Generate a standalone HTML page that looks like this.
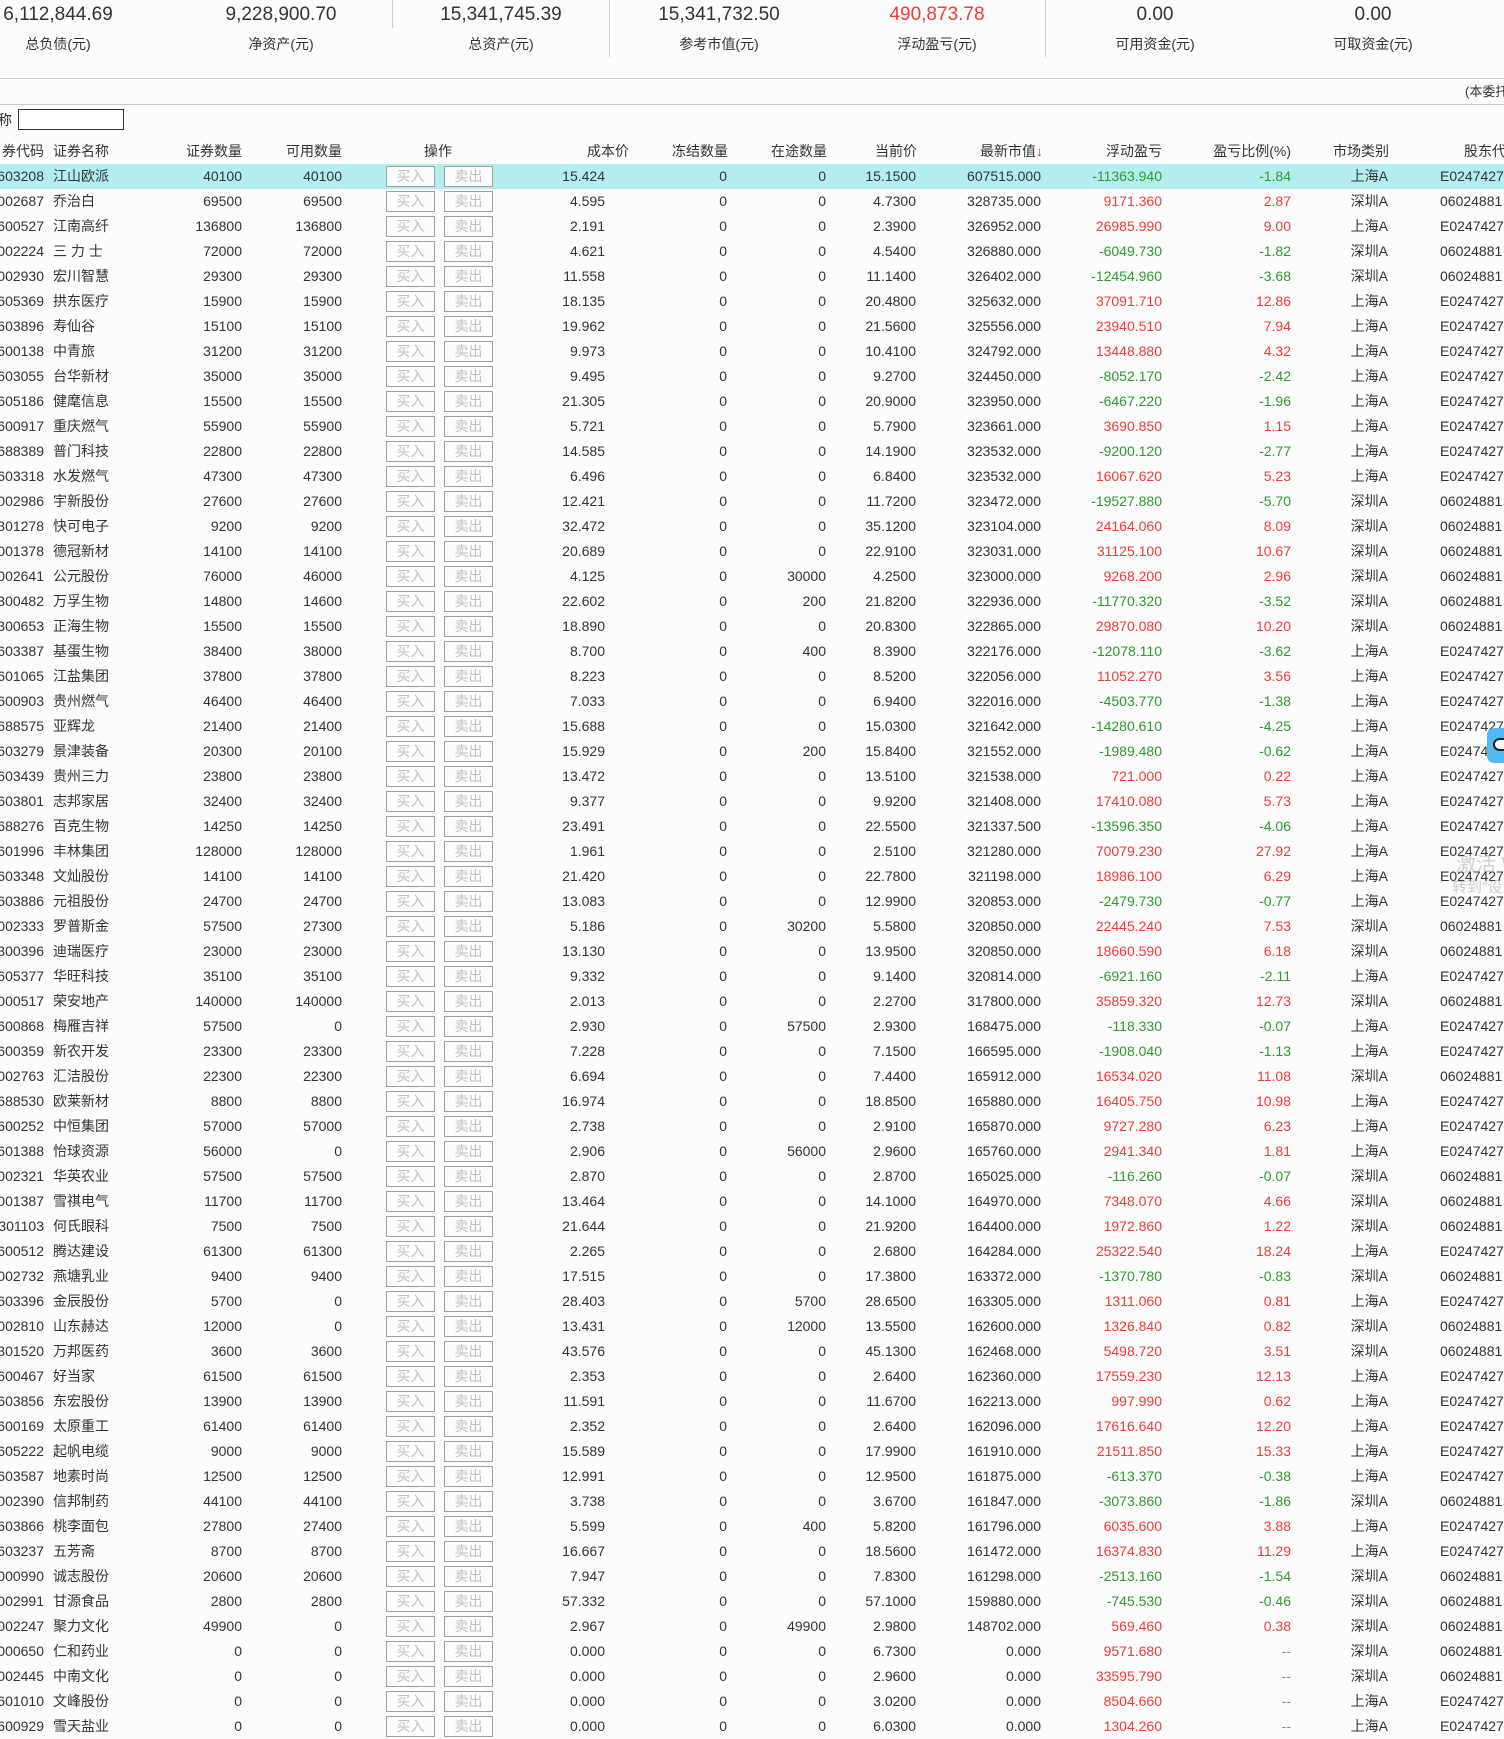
<!DOCTYPE html>
<html><head><meta charset="utf-8">
<style>
*{margin:0;padding:0;box-sizing:border-box}
html,body{width:1504px;height:1736px;overflow:hidden;background:#fcfcfc;font-family:"Liberation Sans","Noto Sans CJK SC",sans-serif;color:#333}
.t{position:absolute;white-space:nowrap}
.num{font-size:19px;top:3px;line-height:24px;transform:translateX(-50%)}
.lab{font-size:14px;top:34px;line-height:20px;transform:translateX(-50%)}
.vl{position:absolute;width:1px;background:#ccc;top:0}
.hl{position:absolute;left:0;width:1504px;height:1px;background:#ccc}
#hd{position:absolute;top:139px;left:0;width:1504px;height:24px;font-size:14px;line-height:24px}
#hd span{position:absolute;white-space:nowrap}
#tb{position:absolute;top:164px;left:0;width:1504px}
.r{position:relative;height:25px;font-size:14px;line-height:25px}
.r.s{background:#b2eeee}
.r span{position:absolute;white-space:nowrap}
.r span:nth-child(1){right:1460px}
.r span:nth-child(2){left:53px}
.r span:nth-child(3){right:1262px}
.r span:nth-child(4){right:1162px}
.r span:nth-child(5),.r span:nth-child(6){top:2px;width:49px;height:21px;border:1px solid #a0a0a0;color:#c0c0c0;text-align:center;line-height:19px;font-size:14px;background:#fcfcfc}
.r span:nth-child(5){left:386px}
.r span:nth-child(6){left:444px}
.r span:nth-child(7){right:899px}
.r span:nth-child(8){right:777px}
.r span:nth-child(9){right:678px}
.r span:nth-child(10){right:588px}
.r span:nth-child(11){right:463px}
.r span:nth-child(12){right:342px}
.r span:nth-child(13){right:213px}
.r span:nth-child(14){right:116px}
.r span:nth-child(15){left:1440px}
.u span:nth-child(12),.u span:nth-child(13){color:#f03a3a}
.d span:nth-child(12),.d span:nth-child(13){color:#2c9a2c}
.g span:nth-child(13){color:#888}
</style></head><body>
<div class="t num" style="left:58px">6,112,844.69</div>
<div class="t num" style="left:281px">9,228,900.70</div>
<div class="t num" style="left:501px">15,341,745.39</div>
<div class="t num" style="left:719px">15,341,732.50</div>
<div class="t num" style="left:937px;color:#f03a3a">490,873.78</div>
<div class="t num" style="left:1155px">0.00</div>
<div class="t num" style="left:1373px">0.00</div>
<div class="t lab" style="left:58px">总负债(元)</div>
<div class="t lab" style="left:281px">净资产(元)</div>
<div class="t lab" style="left:501px">总资产(元)</div>
<div class="t lab" style="left:719px">参考市值(元)</div>
<div class="t lab" style="left:937px">浮动盈亏(元)</div>
<div class="t lab" style="left:1155px">可用资金(元)</div>
<div class="t lab" style="left:1373px">可取资金(元)</div>
<div class="vl" style="left:392px;height:28px"></div>
<div class="vl" style="left:609px;height:57px"></div>
<div class="vl" style="left:1045px;height:57px"></div>
<div class="hl" style="top:78px"></div>
<div class="hl" style="top:104px"></div>
<div class="t" style="left:1465px;top:82px;font-size:13px;line-height:20px">(本委托</div>
<div class="t" style="left:-2px;top:110px;font-size:14px;line-height:20px">称</div>
<div style="position:absolute;left:18px;top:109px;width:106px;height:21px;border:1px solid #333;background:#fff"></div>
<div id="hd">
<span style="right:1460px">券代码</span><span style="left:53px">证券名称</span><span style="right:1262px">证券数量</span><span style="right:1162px">可用数量</span><span style="left:424px">操作</span><span style="right:875px">成本价</span><span style="right:776px">冻结数量</span><span style="right:677px">在途数量</span><span style="right:587px">当前价</span><span style="right:461px">最新市值<b style="color:#e22;font-weight:normal">↓</b></span><span style="right:342px">浮动盈亏</span><span style="right:213px">盈亏比例(%)</span><span style="right:115px">市场类别</span><span style="left:1464px">股东代</span>
</div>
<div id="tb">
<div class="r s d"><span>603208</span><span>江山欧派</span><span>40100</span><span>40100</span><span>买入</span><span>卖出</span><span>15.424</span><span>0</span><span>0</span><span>15.1500</span><span>607515.000</span><span>-11363.940</span><span>-1.84</span><span>上海A</span><span>E0247427</span></div>
<div class="r u"><span>002687</span><span>乔治白</span><span>69500</span><span>69500</span><span>买入</span><span>卖出</span><span>4.595</span><span>0</span><span>0</span><span>4.7300</span><span>328735.000</span><span>9171.360</span><span>2.87</span><span>深圳A</span><span>06024881</span></div>
<div class="r u"><span>600527</span><span>江南高纤</span><span>136800</span><span>136800</span><span>买入</span><span>卖出</span><span>2.191</span><span>0</span><span>0</span><span>2.3900</span><span>326952.000</span><span>26985.990</span><span>9.00</span><span>上海A</span><span>E0247427</span></div>
<div class="r d"><span>002224</span><span>三 力 士</span><span>72000</span><span>72000</span><span>买入</span><span>卖出</span><span>4.621</span><span>0</span><span>0</span><span>4.5400</span><span>326880.000</span><span>-6049.730</span><span>-1.82</span><span>深圳A</span><span>06024881</span></div>
<div class="r d"><span>002930</span><span>宏川智慧</span><span>29300</span><span>29300</span><span>买入</span><span>卖出</span><span>11.558</span><span>0</span><span>0</span><span>11.1400</span><span>326402.000</span><span>-12454.960</span><span>-3.68</span><span>深圳A</span><span>06024881</span></div>
<div class="r u"><span>605369</span><span>拱东医疗</span><span>15900</span><span>15900</span><span>买入</span><span>卖出</span><span>18.135</span><span>0</span><span>0</span><span>20.4800</span><span>325632.000</span><span>37091.710</span><span>12.86</span><span>上海A</span><span>E0247427</span></div>
<div class="r u"><span>603896</span><span>寿仙谷</span><span>15100</span><span>15100</span><span>买入</span><span>卖出</span><span>19.962</span><span>0</span><span>0</span><span>21.5600</span><span>325556.000</span><span>23940.510</span><span>7.94</span><span>上海A</span><span>E0247427</span></div>
<div class="r u"><span>600138</span><span>中青旅</span><span>31200</span><span>31200</span><span>买入</span><span>卖出</span><span>9.973</span><span>0</span><span>0</span><span>10.4100</span><span>324792.000</span><span>13448.880</span><span>4.32</span><span>上海A</span><span>E0247427</span></div>
<div class="r d"><span>603055</span><span>台华新材</span><span>35000</span><span>35000</span><span>买入</span><span>卖出</span><span>9.495</span><span>0</span><span>0</span><span>9.2700</span><span>324450.000</span><span>-8052.170</span><span>-2.42</span><span>上海A</span><span>E0247427</span></div>
<div class="r d"><span>605186</span><span>健麾信息</span><span>15500</span><span>15500</span><span>买入</span><span>卖出</span><span>21.305</span><span>0</span><span>0</span><span>20.9000</span><span>323950.000</span><span>-6467.220</span><span>-1.96</span><span>上海A</span><span>E0247427</span></div>
<div class="r u"><span>600917</span><span>重庆燃气</span><span>55900</span><span>55900</span><span>买入</span><span>卖出</span><span>5.721</span><span>0</span><span>0</span><span>5.7900</span><span>323661.000</span><span>3690.850</span><span>1.15</span><span>上海A</span><span>E0247427</span></div>
<div class="r d"><span>688389</span><span>普门科技</span><span>22800</span><span>22800</span><span>买入</span><span>卖出</span><span>14.585</span><span>0</span><span>0</span><span>14.1900</span><span>323532.000</span><span>-9200.120</span><span>-2.77</span><span>上海A</span><span>E0247427</span></div>
<div class="r u"><span>603318</span><span>水发燃气</span><span>47300</span><span>47300</span><span>买入</span><span>卖出</span><span>6.496</span><span>0</span><span>0</span><span>6.8400</span><span>323532.000</span><span>16067.620</span><span>5.23</span><span>上海A</span><span>E0247427</span></div>
<div class="r d"><span>002986</span><span>宇新股份</span><span>27600</span><span>27600</span><span>买入</span><span>卖出</span><span>12.421</span><span>0</span><span>0</span><span>11.7200</span><span>323472.000</span><span>-19527.880</span><span>-5.70</span><span>深圳A</span><span>06024881</span></div>
<div class="r u"><span>301278</span><span>快可电子</span><span>9200</span><span>9200</span><span>买入</span><span>卖出</span><span>32.472</span><span>0</span><span>0</span><span>35.1200</span><span>323104.000</span><span>24164.060</span><span>8.09</span><span>深圳A</span><span>06024881</span></div>
<div class="r u"><span>001378</span><span>德冠新材</span><span>14100</span><span>14100</span><span>买入</span><span>卖出</span><span>20.689</span><span>0</span><span>0</span><span>22.9100</span><span>323031.000</span><span>31125.100</span><span>10.67</span><span>深圳A</span><span>06024881</span></div>
<div class="r u"><span>002641</span><span>公元股份</span><span>76000</span><span>46000</span><span>买入</span><span>卖出</span><span>4.125</span><span>0</span><span>30000</span><span>4.2500</span><span>323000.000</span><span>9268.200</span><span>2.96</span><span>深圳A</span><span>06024881</span></div>
<div class="r d"><span>300482</span><span>万孚生物</span><span>14800</span><span>14600</span><span>买入</span><span>卖出</span><span>22.602</span><span>0</span><span>200</span><span>21.8200</span><span>322936.000</span><span>-11770.320</span><span>-3.52</span><span>深圳A</span><span>06024881</span></div>
<div class="r u"><span>300653</span><span>正海生物</span><span>15500</span><span>15500</span><span>买入</span><span>卖出</span><span>18.890</span><span>0</span><span>0</span><span>20.8300</span><span>322865.000</span><span>29870.080</span><span>10.20</span><span>深圳A</span><span>06024881</span></div>
<div class="r d"><span>603387</span><span>基蛋生物</span><span>38400</span><span>38000</span><span>买入</span><span>卖出</span><span>8.700</span><span>0</span><span>400</span><span>8.3900</span><span>322176.000</span><span>-12078.110</span><span>-3.62</span><span>上海A</span><span>E0247427</span></div>
<div class="r u"><span>601065</span><span>江盐集团</span><span>37800</span><span>37800</span><span>买入</span><span>卖出</span><span>8.223</span><span>0</span><span>0</span><span>8.5200</span><span>322056.000</span><span>11052.270</span><span>3.56</span><span>上海A</span><span>E0247427</span></div>
<div class="r d"><span>600903</span><span>贵州燃气</span><span>46400</span><span>46400</span><span>买入</span><span>卖出</span><span>7.033</span><span>0</span><span>0</span><span>6.9400</span><span>322016.000</span><span>-4503.770</span><span>-1.38</span><span>上海A</span><span>E0247427</span></div>
<div class="r d"><span>688575</span><span>亚辉龙</span><span>21400</span><span>21400</span><span>买入</span><span>卖出</span><span>15.688</span><span>0</span><span>0</span><span>15.0300</span><span>321642.000</span><span>-14280.610</span><span>-4.25</span><span>上海A</span><span>E0247427</span></div>
<div class="r d"><span>603279</span><span>景津装备</span><span>20300</span><span>20100</span><span>买入</span><span>卖出</span><span>15.929</span><span>0</span><span>200</span><span>15.8400</span><span>321552.000</span><span>-1989.480</span><span>-0.62</span><span>上海A</span><span>E0247427</span></div>
<div class="r u"><span>603439</span><span>贵州三力</span><span>23800</span><span>23800</span><span>买入</span><span>卖出</span><span>13.472</span><span>0</span><span>0</span><span>13.5100</span><span>321538.000</span><span>721.000</span><span>0.22</span><span>上海A</span><span>E0247427</span></div>
<div class="r u"><span>603801</span><span>志邦家居</span><span>32400</span><span>32400</span><span>买入</span><span>卖出</span><span>9.377</span><span>0</span><span>0</span><span>9.9200</span><span>321408.000</span><span>17410.080</span><span>5.73</span><span>上海A</span><span>E0247427</span></div>
<div class="r d"><span>688276</span><span>百克生物</span><span>14250</span><span>14250</span><span>买入</span><span>卖出</span><span>23.491</span><span>0</span><span>0</span><span>22.5500</span><span>321337.500</span><span>-13596.350</span><span>-4.06</span><span>上海A</span><span>E0247427</span></div>
<div class="r u"><span>601996</span><span>丰林集团</span><span>128000</span><span>128000</span><span>买入</span><span>卖出</span><span>1.961</span><span>0</span><span>0</span><span>2.5100</span><span>321280.000</span><span>70079.230</span><span>27.92</span><span>上海A</span><span>E0247427</span></div>
<div class="r u"><span>603348</span><span>文灿股份</span><span>14100</span><span>14100</span><span>买入</span><span>卖出</span><span>21.420</span><span>0</span><span>0</span><span>22.7800</span><span>321198.000</span><span>18986.100</span><span>6.29</span><span>上海A</span><span>E0247427</span></div>
<div class="r d"><span>603886</span><span>元祖股份</span><span>24700</span><span>24700</span><span>买入</span><span>卖出</span><span>13.083</span><span>0</span><span>0</span><span>12.9900</span><span>320853.000</span><span>-2479.730</span><span>-0.77</span><span>上海A</span><span>E0247427</span></div>
<div class="r u"><span>002333</span><span>罗普斯金</span><span>57500</span><span>27300</span><span>买入</span><span>卖出</span><span>5.186</span><span>0</span><span>30200</span><span>5.5800</span><span>320850.000</span><span>22445.240</span><span>7.53</span><span>深圳A</span><span>06024881</span></div>
<div class="r u"><span>300396</span><span>迪瑞医疗</span><span>23000</span><span>23000</span><span>买入</span><span>卖出</span><span>13.130</span><span>0</span><span>0</span><span>13.9500</span><span>320850.000</span><span>18660.590</span><span>6.18</span><span>深圳A</span><span>06024881</span></div>
<div class="r d"><span>605377</span><span>华旺科技</span><span>35100</span><span>35100</span><span>买入</span><span>卖出</span><span>9.332</span><span>0</span><span>0</span><span>9.1400</span><span>320814.000</span><span>-6921.160</span><span>-2.11</span><span>上海A</span><span>E0247427</span></div>
<div class="r u"><span>000517</span><span>荣安地产</span><span>140000</span><span>140000</span><span>买入</span><span>卖出</span><span>2.013</span><span>0</span><span>0</span><span>2.2700</span><span>317800.000</span><span>35859.320</span><span>12.73</span><span>深圳A</span><span>06024881</span></div>
<div class="r d"><span>600868</span><span>梅雁吉祥</span><span>57500</span><span>0</span><span>买入</span><span>卖出</span><span>2.930</span><span>0</span><span>57500</span><span>2.9300</span><span>168475.000</span><span>-118.330</span><span>-0.07</span><span>上海A</span><span>E0247427</span></div>
<div class="r d"><span>600359</span><span>新农开发</span><span>23300</span><span>23300</span><span>买入</span><span>卖出</span><span>7.228</span><span>0</span><span>0</span><span>7.1500</span><span>166595.000</span><span>-1908.040</span><span>-1.13</span><span>上海A</span><span>E0247427</span></div>
<div class="r u"><span>002763</span><span>汇洁股份</span><span>22300</span><span>22300</span><span>买入</span><span>卖出</span><span>6.694</span><span>0</span><span>0</span><span>7.4400</span><span>165912.000</span><span>16534.020</span><span>11.08</span><span>深圳A</span><span>06024881</span></div>
<div class="r u"><span>688530</span><span>欧莱新材</span><span>8800</span><span>8800</span><span>买入</span><span>卖出</span><span>16.974</span><span>0</span><span>0</span><span>18.8500</span><span>165880.000</span><span>16405.750</span><span>10.98</span><span>上海A</span><span>E0247427</span></div>
<div class="r u"><span>600252</span><span>中恒集团</span><span>57000</span><span>57000</span><span>买入</span><span>卖出</span><span>2.738</span><span>0</span><span>0</span><span>2.9100</span><span>165870.000</span><span>9727.280</span><span>6.23</span><span>上海A</span><span>E0247427</span></div>
<div class="r u"><span>601388</span><span>怡球资源</span><span>56000</span><span>0</span><span>买入</span><span>卖出</span><span>2.906</span><span>0</span><span>56000</span><span>2.9600</span><span>165760.000</span><span>2941.340</span><span>1.81</span><span>上海A</span><span>E0247427</span></div>
<div class="r d"><span>002321</span><span>华英农业</span><span>57500</span><span>57500</span><span>买入</span><span>卖出</span><span>2.870</span><span>0</span><span>0</span><span>2.8700</span><span>165025.000</span><span>-116.260</span><span>-0.07</span><span>深圳A</span><span>06024881</span></div>
<div class="r u"><span>001387</span><span>雪祺电气</span><span>11700</span><span>11700</span><span>买入</span><span>卖出</span><span>13.464</span><span>0</span><span>0</span><span>14.1000</span><span>164970.000</span><span>7348.070</span><span>4.66</span><span>深圳A</span><span>06024881</span></div>
<div class="r u"><span>301103</span><span>何氏眼科</span><span>7500</span><span>7500</span><span>买入</span><span>卖出</span><span>21.644</span><span>0</span><span>0</span><span>21.9200</span><span>164400.000</span><span>1972.860</span><span>1.22</span><span>深圳A</span><span>06024881</span></div>
<div class="r u"><span>600512</span><span>腾达建设</span><span>61300</span><span>61300</span><span>买入</span><span>卖出</span><span>2.265</span><span>0</span><span>0</span><span>2.6800</span><span>164284.000</span><span>25322.540</span><span>18.24</span><span>上海A</span><span>E0247427</span></div>
<div class="r d"><span>002732</span><span>燕塘乳业</span><span>9400</span><span>9400</span><span>买入</span><span>卖出</span><span>17.515</span><span>0</span><span>0</span><span>17.3800</span><span>163372.000</span><span>-1370.780</span><span>-0.83</span><span>深圳A</span><span>06024881</span></div>
<div class="r u"><span>603396</span><span>金辰股份</span><span>5700</span><span>0</span><span>买入</span><span>卖出</span><span>28.403</span><span>0</span><span>5700</span><span>28.6500</span><span>163305.000</span><span>1311.060</span><span>0.81</span><span>上海A</span><span>E0247427</span></div>
<div class="r u"><span>002810</span><span>山东赫达</span><span>12000</span><span>0</span><span>买入</span><span>卖出</span><span>13.431</span><span>0</span><span>12000</span><span>13.5500</span><span>162600.000</span><span>1326.840</span><span>0.82</span><span>深圳A</span><span>06024881</span></div>
<div class="r u"><span>301520</span><span>万邦医药</span><span>3600</span><span>3600</span><span>买入</span><span>卖出</span><span>43.576</span><span>0</span><span>0</span><span>45.1300</span><span>162468.000</span><span>5498.720</span><span>3.51</span><span>深圳A</span><span>06024881</span></div>
<div class="r u"><span>600467</span><span>好当家</span><span>61500</span><span>61500</span><span>买入</span><span>卖出</span><span>2.353</span><span>0</span><span>0</span><span>2.6400</span><span>162360.000</span><span>17559.230</span><span>12.13</span><span>上海A</span><span>E0247427</span></div>
<div class="r u"><span>603856</span><span>东宏股份</span><span>13900</span><span>13900</span><span>买入</span><span>卖出</span><span>11.591</span><span>0</span><span>0</span><span>11.6700</span><span>162213.000</span><span>997.990</span><span>0.62</span><span>上海A</span><span>E0247427</span></div>
<div class="r u"><span>600169</span><span>太原重工</span><span>61400</span><span>61400</span><span>买入</span><span>卖出</span><span>2.352</span><span>0</span><span>0</span><span>2.6400</span><span>162096.000</span><span>17616.640</span><span>12.20</span><span>上海A</span><span>E0247427</span></div>
<div class="r u"><span>605222</span><span>起帆电缆</span><span>9000</span><span>9000</span><span>买入</span><span>卖出</span><span>15.589</span><span>0</span><span>0</span><span>17.9900</span><span>161910.000</span><span>21511.850</span><span>15.33</span><span>上海A</span><span>E0247427</span></div>
<div class="r d"><span>603587</span><span>地素时尚</span><span>12500</span><span>12500</span><span>买入</span><span>卖出</span><span>12.991</span><span>0</span><span>0</span><span>12.9500</span><span>161875.000</span><span>-613.370</span><span>-0.38</span><span>上海A</span><span>E0247427</span></div>
<div class="r d"><span>002390</span><span>信邦制药</span><span>44100</span><span>44100</span><span>买入</span><span>卖出</span><span>3.738</span><span>0</span><span>0</span><span>3.6700</span><span>161847.000</span><span>-3073.860</span><span>-1.86</span><span>深圳A</span><span>06024881</span></div>
<div class="r u"><span>603866</span><span>桃李面包</span><span>27800</span><span>27400</span><span>买入</span><span>卖出</span><span>5.599</span><span>0</span><span>400</span><span>5.8200</span><span>161796.000</span><span>6035.600</span><span>3.88</span><span>上海A</span><span>E0247427</span></div>
<div class="r u"><span>603237</span><span>五芳斋</span><span>8700</span><span>8700</span><span>买入</span><span>卖出</span><span>16.667</span><span>0</span><span>0</span><span>18.5600</span><span>161472.000</span><span>16374.830</span><span>11.29</span><span>上海A</span><span>E0247427</span></div>
<div class="r d"><span>000990</span><span>诚志股份</span><span>20600</span><span>20600</span><span>买入</span><span>卖出</span><span>7.947</span><span>0</span><span>0</span><span>7.8300</span><span>161298.000</span><span>-2513.160</span><span>-1.54</span><span>深圳A</span><span>06024881</span></div>
<div class="r d"><span>002991</span><span>甘源食品</span><span>2800</span><span>2800</span><span>买入</span><span>卖出</span><span>57.332</span><span>0</span><span>0</span><span>57.1000</span><span>159880.000</span><span>-745.530</span><span>-0.46</span><span>深圳A</span><span>06024881</span></div>
<div class="r u"><span>002247</span><span>聚力文化</span><span>49900</span><span>0</span><span>买入</span><span>卖出</span><span>2.967</span><span>0</span><span>49900</span><span>2.9800</span><span>148702.000</span><span>569.460</span><span>0.38</span><span>深圳A</span><span>06024881</span></div>
<div class="r u g"><span>000650</span><span>仁和药业</span><span>0</span><span>0</span><span>买入</span><span>卖出</span><span>0.000</span><span>0</span><span>0</span><span>6.7300</span><span>0.000</span><span>9571.680</span><span>--</span><span>深圳A</span><span>06024881</span></div>
<div class="r u g"><span>002445</span><span>中南文化</span><span>0</span><span>0</span><span>买入</span><span>卖出</span><span>0.000</span><span>0</span><span>0</span><span>2.9600</span><span>0.000</span><span>33595.790</span><span>--</span><span>深圳A</span><span>06024881</span></div>
<div class="r u g"><span>601010</span><span>文峰股份</span><span>0</span><span>0</span><span>买入</span><span>卖出</span><span>0.000</span><span>0</span><span>0</span><span>3.0200</span><span>0.000</span><span>8504.660</span><span>--</span><span>上海A</span><span>E0247427</span></div>
<div class="r u g"><span>600929</span><span>雪天盐业</span><span>0</span><span>0</span><span>买入</span><span>卖出</span><span>0.000</span><span>0</span><span>0</span><span>6.0300</span><span>0.000</span><span>1304.260</span><span>--</span><span>上海A</span><span>E0247427</span></div>
</div>
<div class="t" style="left:1456px;top:848px;font-size:20px;color:rgba(150,150,150,0.45)">激活 Windows</div>
<div class="t" style="left:1452px;top:876px;font-size:15px;color:rgba(150,150,150,0.45)">转到"设置"</div>
<div style="position:absolute;left:1487px;top:728px;width:20px;height:35px;background:#52b9f3;border-radius:7px 0 0 7px"></div>
<div style="position:absolute;left:1493px;top:738px;width:14px;height:13px;background:#fff;border:2px solid #222;border-radius:7px 0 0 7px"></div>
</body></html>
